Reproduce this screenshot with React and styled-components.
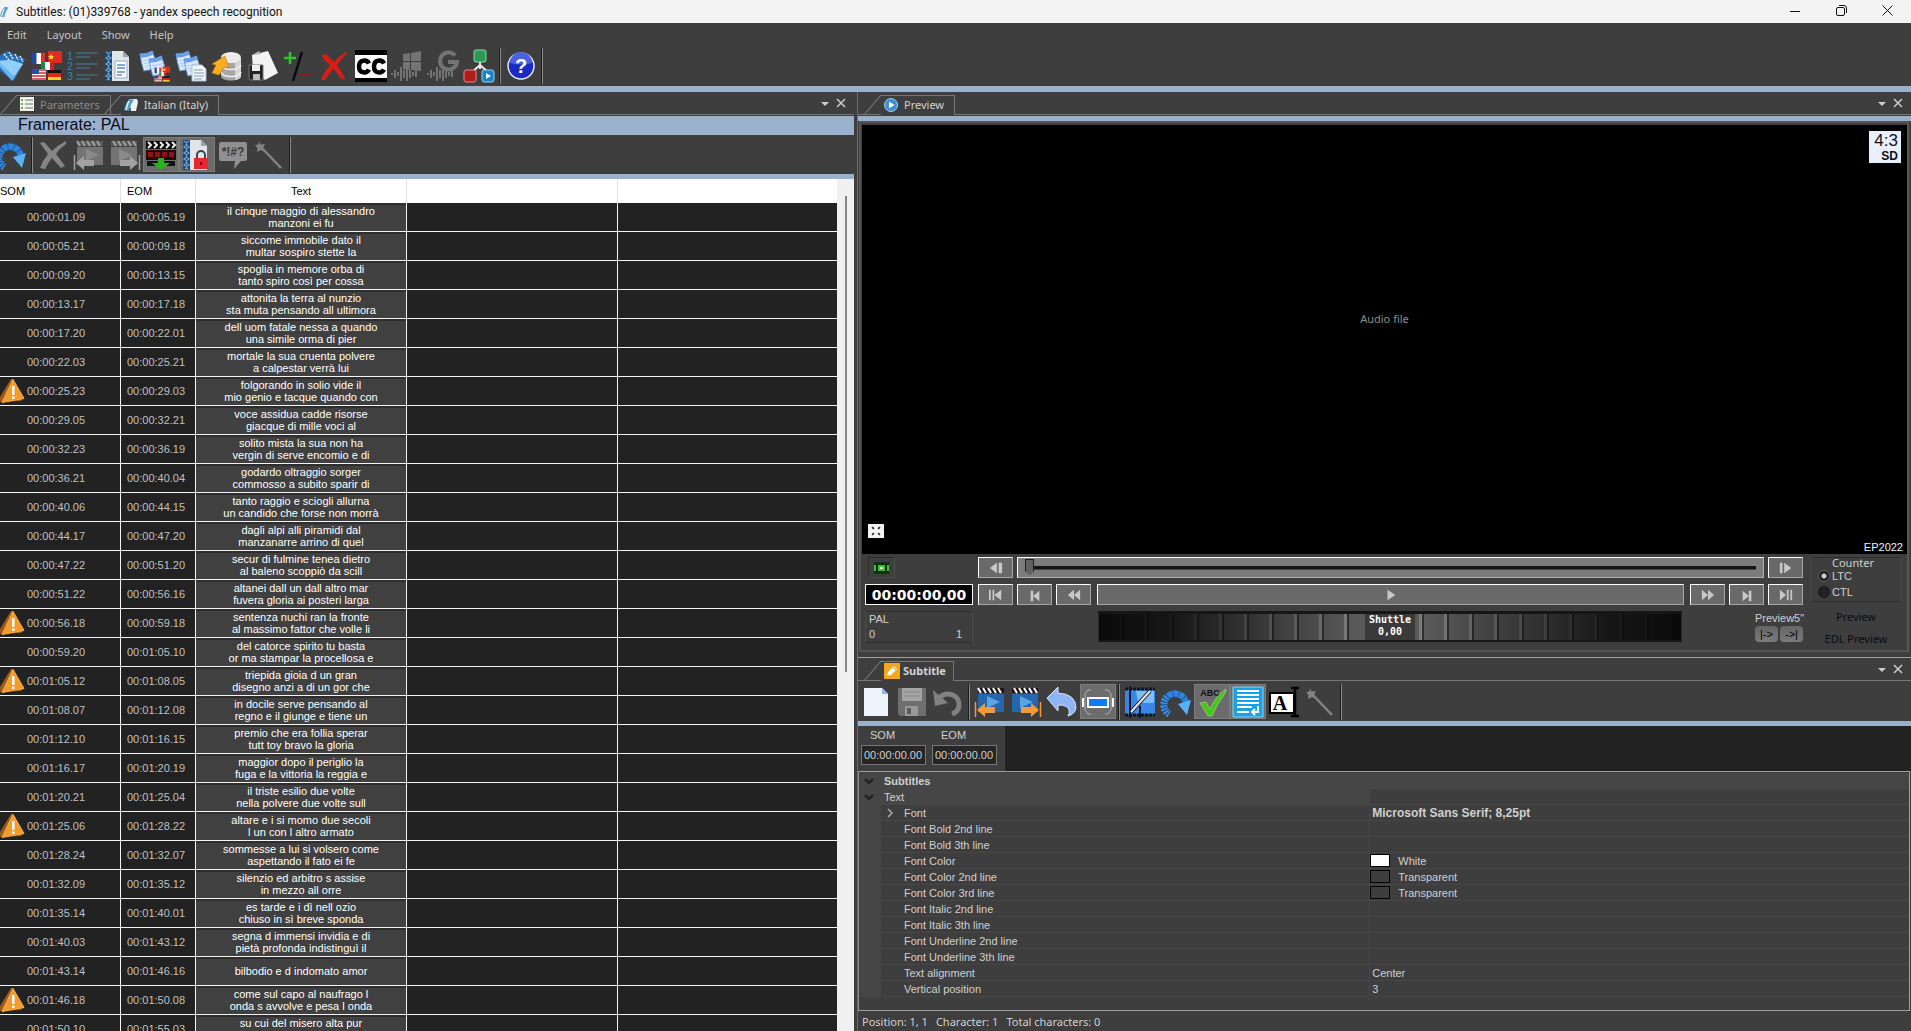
import React from "react";
import styled, { createGlobalStyle, css } from "styled-components";

const sans = '"Liberation Sans", Arial, sans-serif';
const ui = '"Noto Sans", "Open Sans", sans-serif';
const c = {
  bg: "#3e3e3e",
  dark: "#222222",
  blue: "#9ab1cd",
  line: "#777777",
  text: "#d0d0d0",
};

const Global = createGlobalStyle`
  * { box-sizing: border-box; }
  html, body { margin: 0; height: 100%; }
  body { background: ${c.bg}; font: 11px ${sans}; color: ${c.text}; overflow: hidden; }
  button, input { font: inherit; color: inherit; }
  button { padding: 0; border: 0; background: none; }
  svg { display: block; overflow: visible; }
`;

const Frame = styled.div`
  display: flex;
  flex-direction: column;
  height: 100vh;
  min-width: 1000px;
`;

/* ---------- window chrome ---------- */
const TitleBar = styled.header`
  display: flex;
  align-items: center;
  height: 23px;
  flex: none;
  background: #f3f3f3;
  color: #111;
`;
const TitleIcon = styled.span`
  width: 16px;
  overflow: hidden;
`;
const Title = styled.h1`
  flex: 1;
  margin: 0;
  font: 12px Roboto, ${ui};
`;
const WindowButton = styled.button`
  display: grid;
  place-items: center;
  width: 46px;
  height: 23px;
  padding: 0 2px 2px 0;
`;
const MenuBar = styled.nav`
  display: flex;
  flex: none;
  gap: 20px;
  height: 23px;
  padding-left: 7px;
  align-items: center;
`;
const MenuItem = styled.button`
  font: 11px/16px ${ui};
  color: #c4c4c4;
`;

/* ---------- toolbars ---------- */
const Toolbar = styled.div`
  display: flex;
  align-items: center;
  flex: none;
  height: ${(p) => p.$height}px;
  margin-left: ${(p) => (p.$cut ? -7 : 0)}px;
  border-bottom: ${(p) => p.$rule}px solid ${c.blue};
`;
const ToolButton = styled.button`
  display: grid;
  place-items: center;
  width: 36px;
  height: 35px;
  flex: none;
  ${(p) =>
    p.$active &&
    css`
      background: #6c6c6c;
      box-shadow: inset 0 0 0 1px #7c7c7c;
    `}
`;
const Divider = styled.span`
  width: 2px;
  height: 36px;
  margin: 0 2px;
  flex: none;
  border-left: 1px solid #1c1c1c;
  border-right: 1px solid #8a8a8a;
`;

/* ---------- docking panels ---------- */
const Workspace = styled.main`
  display: grid;
  flex: 1;
  min-height: 0;
  grid-template-columns: minmax(0, 854fr) minmax(0, 1054fr);
  gap: 3px;
`;
const LeftPane = styled.section`
  display: flex;
  flex-direction: column;
  min-height: 0;
  overflow: hidden;
`;
const RightPane = styled.section`
  display: flex;
  flex-direction: column;
  min-height: 0;
  border-left: 1px solid #6c6c6c;
`;
const TabStrip = styled.div`
  display: flex;
  flex: none;
  height: 24px;
  padding: 3px 8px 1px ${(p) => p.$inset || 0}px;
  box-shadow: inset 0 -1px ${c.bg}, inset 0 -2px ${c.line};
`;
const Tab = styled.button`
  position: relative;
  display: flex;
  height: 20px;
  margin-left: ${(p) => (p.$overlap ? -7 : 0)}px;
  color: ${(p) => (p.$dim ? "#8a8a8a" : "#d2d2d2")};
  font: ${(p) => (p.$bold ? "bold " : "")}11px ${ui};
  &::before {
    content: "";
    width: 17px;
    background: linear-gradient(to bottom right, transparent calc(50% - 1px), ${c.line} 50%, transparent calc(50% + 1px));
  }
`;
const TabBody = styled.span`
  display: flex;
  align-items: center;
  gap: ${(p) => (p.$tight ? 3 : 6)}px;
  height: ${(p) => (p.$dim ? 19 : 20)}px;
  padding: 0 ${(p) => (p.$tight ? 7 : 10)}px 2px 3px;
  border-top: 1px solid ${c.line};
  border-right: 1px solid ${c.line};
  background: ${c.bg};
`;
const StripTools = styled.div`
  display: flex;
  align-items: center;
  gap: 6px;
  margin-left: auto;
  padding-bottom: 4px;
`;

/* ---------- subtitle list ---------- */
const FrameRate = styled.h2`
  flex: none;
  height: 19px;
  margin: 0;
  padding-left: 18px;
  background: ${c.blue};
  color: #0a0a12;
  font: 16px/17px ${sans};
`;
const ListArea = styled.div`
  display: flex;
  flex: 1;
  min-height: 0;
  overflow: hidden;
  background: ${c.dark};
`;
const ListScroll = styled.div`
  flex: 1;
  overflow: hidden;
`;
const List = styled.table`
  width: 100%;
  table-layout: fixed;
  border-collapse: separate;
  border-spacing: 0;
`;
const Col = styled.col`
  width: ${(p) => p.$w};
`;
const Head = styled.th`
  height: 24px;
  padding: 0 0 6px ${(p) => p.$pad || 0}px;
  background: #fff;
  border-right: ${(p) => (p.$last ? 0 : 1)}px solid #e2e2e2;
  color: #000;
  font-weight: normal;
  text-align: ${(p) => p.$align || "left"};
  vertical-align: bottom;
`;
const Cell = styled.td`
  height: 29px;
  padding: 0 0 0 ${(p) => p.$pad || 0}px;
  background: ${(p) => (p.$text ? "#404040" : c.dark)};
  border-bottom: 1px solid #f4f4f4;
  border-right: ${(p) => (p.$last ? 0 : 1)}px solid #f4f4f4;
  box-shadow: ${(p) => (p.$text ? "inset 0 2px #2e2e2e" : "none")};
  color: ${(p) => (p.$text ? "#fff" : "#c0c0c0")};
  line-height: 12px;
  text-align: ${(p) => (p.$text ? "center" : "left")};
  white-space: pre-line;
`;
const SomCell = styled.div`
  display: flex;
  align-items: center;
`;
const Flag = styled.span`
  width: 27px;
`;
const ScrollTrack = styled.div`
  width: 17px;
  padding: 17px 0 0 8px;
  background: #f0f0f0;
`;
const ScrollThumb = styled.div`
  width: 2px;
  height: 57%;
  background: #878787;
`;

/* ---------- preview ---------- */
const PreviewBody = styled.div`
  display: flex;
  flex-direction: column;
  flex: 1;
  min-height: 0;
  margin: 0 2px 5px 1px;
  border: 2px solid #555;
`;
const BlueRule = styled.div`
  flex: none;
  height: 5px;
  background: ${c.blue};
`;
const Stage = styled.div`
  position: relative;
  display: grid;
  place-items: center;
  flex: 1;
  min-height: 0;
  margin: 2px 0 0 1px;
  padding-bottom: 42px;
  background: #000;
  color: #8c8c8c;
  font: 11px ${ui};
`;
const RatioBadge = styled.div`
  position: absolute;
  top: 6px;
  right: 6px;
  width: 32px;
  height: 32px;
  padding-right: 3px;
  background: #e9effc;
  color: #111;
  text-align: right;
  font: 17px/19px ${sans};
`;
const RatioKind = styled.div`
  font: bold 12px/13px ${sans};
`;
const FullScreen = styled.button`
  position: absolute;
  left: 6px;
  bottom: 16px;
`;
const StageVersion = styled.span`
  position: absolute;
  right: 4px;
  bottom: 0;
  color: #f2f2f2;
  font: 11px/14px ${sans};
`;
const Controls = styled.div`
  display: grid;
  grid-template-columns: 108px minmax(0, 1fr) 92px;
  gap: 5px;
  height: 96px;
  flex: none;
  padding: 3px 5px 0 4px;
`;
const ControlColumn = styled.div`
  display: flex;
  flex-direction: column;
  gap: 6px;
  padding-right: ${(p) => (p.$deck ? 2 : 0)}px;
`;
const ControlRow = styled.div`
  display: flex;
  gap: 4px;
  height: ${(p) => p.$height || 21}px;
`;
const FilmButton = styled.button`
  display: grid;
  place-items: center;
  width: 27px;
  height: 21px;
  margin-left: 3px;
  border: 1px solid;
  border-color: #2c2c2c #4c4c4c #4c4c4c #2c2c2c;
`;
const TimeCode = styled.input`
  width: 100%;
  height: 21px;
  padding: 0;
  border: 1px solid #fff;
  background: #000;
  color: #fff;
  text-align: center;
  font: bold 14px "DejaVu Sans", sans-serif;
`;
const Standard = styled.div`
  display: grid;
  grid-template-columns: 1fr 1fr;
  padding: 0 10px 2px 3px;
  line-height: 15px;
  height: 32px;
  border: 1px solid;
  border-color: #2f2f2f #4a4a4a #2f2f2f #4a4a4a;
`;
const StandardName = styled.span`
  grid-column: 1 / -1;
`;
const StandardEnd = styled.span`
  text-align: right;
`;
const Transport = styled.button`
  display: grid;
  place-items: center;
  height: 21px;
  ${(p) => (p.$wide ? "flex: 1; margin: 0 2px;" : "width: 35px; flex: none;")}
  background: #696969;
  border: 1px solid #fff;
  border-right-color: #a5a5a5;
  border-bottom-color: #a5a5a5;
`;
const Slider = styled.input`
  appearance: none;
  flex: 1;
  min-width: 0;
  height: 21px;
  margin: 0;
  padding: 0 7px;
  background: #7c7c7c;
  border: 1px solid #fff;
  border-bottom-color: #b0b0b0;
  border-right-color: #b0b0b0;
  &::-webkit-slider-runnable-track {
    height: 4px;
    background: #161616;
    border-bottom: 1px solid #444;
  }
  &::-webkit-slider-thumb {
    appearance: none;
    width: 9px;
    height: 17px;
    margin-top: -7px;
    clip-path: polygon(0 0, 100% 0, 100% 75%, 50% 100%, 0 75%);
    background: linear-gradient(90deg, #222 1px, #606060 1px 8px, #222 8px);
    border-top: 1px solid #222;
  }
`;
const Shuttle = styled.div`
  display: grid;
  place-items: center;
  flex: 1;
  height: 31px;
  margin-left: 120px;
  border: 1px solid #2a2a2a;
  border-top: 3px solid #161616;
  border-bottom: 2px solid #161616;
  background: linear-gradient(90deg, #0a0a0a, rgba(10, 10, 10, 0.85) 12%, rgba(10, 10, 10, 0) 44%, rgba(10, 10, 10, 0) 56%, rgba(10, 10, 10, 0.85) 88%, #0a0a0a),
    repeating-linear-gradient(90deg, #5a5a5a 0 20px, #7c7c7c 20px 23px, #303030 23px 25px);
`;
const ShuttleLabel = styled.span`
  height: 26px;
  padding: 0 4px;
  background: #3a3a3a;
  color: #fff;
  text-align: center;
  white-space: pre-line;
  font: bold 10px/12px "DejaVu Sans Mono", monospace;
`;
const ShortPreview = styled.div`
  display: grid;
  grid-template-columns: 23px 23px;
  gap: 0 2px;
  width: 117px;
  justify-content: end;
  line-height: 15px;
  white-space: nowrap;
`;
const ShortTitle = styled.span`
  grid-column: 1 / -1;
`;
const PillButton = styled.button`
  height: 16px;
  border-radius: 4px;
  background: linear-gradient(#666, #7a7a7a);
  color: #000;
  font: 11px/14px ${sans};
`;
const Counter = styled.fieldset`
  display: flex;
  flex-direction: column;
  height: 45px;
  margin: 0;
  padding: 0 0 0 7px;
  border: 1px solid;
  border-color: #2f2f2f #4a4a4a #2f2f2f #4a4a4a;
`;
const CounterTitle = styled.span`
  padding-left: 14px;
  line-height: 10px;
  font-family: ${ui};
`;
const RadioLabel = styled.label`
  display: flex;
  align-items: center;
  gap: 2px;
  height: 16px;
`;
const Radio = styled.input`
  appearance: none;
  width: 12px;
  height: 12px;
  margin: 0;
  border-radius: 50%;
  background: #222;
  border: 1px solid #1a1a1a;
  &:checked {
    background: radial-gradient(#ccc 0 2px, #222 3px);
    border-color: #5a5a5a;
  }
`;
const FlatButton = styled.button`
  height: 16px;
  color: #0c0c0c;
  font: 11px ${ui};
`;

/* ---------- subtitle editor ---------- */
const EditorPane = styled.section`
  display: flex;
  flex-direction: column;
  flex: none;
  border-top: 1px solid #a0a0a0;
`;
const TimesRow = styled.div`
  display: flex;
  height: 45px;
  background: ${c.dark};
`;
const Times = styled.div`
  display: flex;
  gap: 6px;
  width: 147px;
  padding: 2px 3px;
  background: ${c.bg};
`;
const TimeField = styled.label`
  display: flex;
  flex-direction: column;
  line-height: 15px;
  gap: 2px;
  text-indent: 9px;
`;
const TimeInput = styled.input`
  width: 65px;
  height: 20px;
  padding: 0 2px;
  border: 1px solid #777;
  background: #262626;
`;
const PropertyBox = styled.div`
  height: 240px;
  margin-right: 1px;
  padding-top: 1px;
  border: 1px solid #a0a0a0;
  border-left-color: #888;
  background: ${c.bg};
`;
const Properties = styled.table`
  width: 100%;
  table-layout: fixed;
  border-collapse: separate;
  border-spacing: 0;
`;
const PropGutter = styled.td`
  padding: 0 0 0 5px;
  background: #464646;
`;
const PropName = styled.td`
  height: 16px;
  padding: 0 0 0 ${(p) => (p.$group ? 3 : 23)}px;
  background: ${(p) => (p.$group ? "#464646" : c.bg)};
  border-bottom: 1px solid #464646;
  font-weight: ${(p) => (p.$bold ? "bold" : "normal")};
  line-height: 14px;
`;
const PropValue = styled.td`
  padding: 0 0 0 ${(p) => (p.$swatch ? 0 : 2)}px;
  background: ${(p) => (p.$group ? "#464646" : c.bg)};
  border-bottom: 1px solid #464646;
  border-left: 1px solid #464646;
  font: ${(p) => (p.$bold ? "bold 12px" : "11px")}/14px ${sans};
`;
const PropNameInner = styled.span`
  display: flex;
  align-items: center;
  gap: 11px;
  margin-left: ${(p) => (p.$expand ? -17 : 0)}px;
`;
const SwatchRow = styled.span`
  display: flex;
  align-items: center;
  gap: 8px;
`;
const Swatch = styled.span`
  width: 20px;
  height: 13px;
  border: 1px solid #000;
  background: ${(p) => p.$fill};
`;
const StatusBar = styled.footer`
  display: flex;
  align-items: center;
  gap: 8px;
  height: 20px;
  padding-left: 4px;
  font: 11px ${ui};
`;

/* ---------- icons ---------- */
const Svg = ({ s = 32, w, h, children, vb }) => (
  <svg width={w || s} height={h || s} viewBox={vb || "0 0 32 32"} fill="none" aria-hidden="true">
    {children}
  </svg>
);
const Sheet = ({ x = 0, y = 0, k = 1 }) => (
  <g transform={`translate(${x} ${y}) scale(${k})`}>
    <path d="M0 3Q6 4 13 0Q16 8 18 17Q12 20 4 21Q1 12 0 3Z" fill="#dbe8fc" stroke="#5f95dd" strokeWidth="1" />
    <path d="M0 3Q6 4 13 0L14 4Q8 7 1 7Z" fill="#6a9fe8" />
    <path d="M3 10q6 0 11-2M4 13q6 0 11-2M5 16q6 0 9-2" stroke="#a9c6f2" />
  </g>
);
const Flags = ({ x = 0, y = 0, k = 1 }) => (
  <g transform={`translate(${x} ${y}) scale(${k})`}>
    <path d="M1 3h13v11H1z" fill="#fff" />
    <path d="M1 3h4.500v11H1z" fill="#2747a8" />
    <path d="M10 3h4v11h-4z" fill="#d33" />
    <path d="M17 1h14v12H17z" fill="#e02c1c" />
    <path d="M20 4l1 2h2l-1.500 1.500.5 2-2-1-2 1 .5-2L17 6h2z" fill="#fd3" />
    <path d="M10 12h13v8H10z" fill="#fff" />
    <path d="M10 12h4v8h-4z" fill="#17894a" />
    <path d="M19 12h4v8h-4z" fill="#c22" />
    <path d="M1 19h14v11H1z" fill="#f4f4f4" />
    <path d="M1 20h14M1 23h14M1 26h14M1 29h14" stroke="#c33" strokeWidth="1.500" />
    <path d="M1 19h7v5H1z" fill="#2d4f9e" />
    <path d="M17 20h13v3H17z" fill="#111" />
    <path d="M17 23h13v4H17z" fill="#e1261c" />
    <path d="M17 27h13v3H17z" fill="#fc2" />
  </g>
);
const DnaDoc = ({ lock }) => (
  <Svg>
    <path d="M8 1h12l6 6v24H8z" fill="#dfe5ea" />
    <path d="M20 1v6h6z" fill="#9ba5af" />
    <path d="M2 1h7v30H2z" fill="#22486f" />
    <path d="M3 2q6 3 0 6q6 3 0 6q6 3 0 6q6 3 0 6q5 2 1 4M8 2q-6 3 0 6q-6 3 0 6q-6 3 0 6q-6 3 0 6q-5 2-1 4" stroke="#6fa9de" strokeWidth="1.200" />
    {lock ? (
      <>
        <path d="M16 19v-3a4 4 0 0 1 8 0v3" stroke="#444" strokeWidth="2" />
        <path d="M13 19h14v11H13z" fill="#e9262e" />
        <path d="M20 23v3" stroke="#600" strokeWidth="2" />
      </>
    ) : (
      <>
        <path d="M12 11h12v17H12z" fill="#fff" stroke="#9ab" />
        <path d="M14 15h8M14 18h8M14 22h8M14 25h5" stroke="#5a8bd0" strokeWidth="1.300" />
      </>
    )}
  </Svg>
);
const Arc = () => (
  <Svg>
    <path d="M9 28A11 11 0 1 1 26 18" stroke="#1c5da8" strokeWidth="7" />
    <path d="M9 28A11 11 0 0 1 8 10" stroke="#5aa6ea" strokeWidth="7" strokeDasharray="1 2" />
    <path d="M8 10A11 11 0 0 1 26 18" stroke="#2f83d8" strokeWidth="6" strokeDasharray="5 1" />
    <path d="M18 18l13-4-4 15z" fill="#58b2f6" />
  </Svg>
);
const Clapper = ({ dir, color }) => {
  const body = color ? "#2467ae" : "#747474";
  const a = color ? "#f5993d" : "#a2a2a2";
  return (
    <Svg>
      <path d={dir < 0 ? "M4 8h26v18H4z" : "M2 8h26v18H2z"} fill={body} />
      <path d={dir < 0 ? "M13 10l13 6-13 6z" : "M10 10l13 6-13 6z"} fill={color ? "#5ba4e2" : "#8a8a8a"} />
      <path d={dir < 0 ? "M4 2h26v5H4z" : "M2 2h26v5H2z"} fill={color ? "#181818" : "#5a5a5a"} />
      <path d="M4 2l3 5M9 2l3 5M14 2l3 5M19 2l3 5M24 2l3 5" stroke={color ? "#fff" : "#a0a0a0"} strokeWidth="2" />
      {dir < 0 ? (
        <>
          <path d="M1.500 16v15" stroke={a} strokeWidth="1.500" />
          <path d="M3 24l8-7v4h10v6H11v4z" fill={a} />
        </>
      ) : (
        <>
          <path d="M30.500 16v15" stroke={a} strokeWidth="1.500" />
          <path d="M29 24l-8-7v4H11v6h10v4z" fill={a} />
        </>
      )}
    </Svg>
  );
};
const Wave = () => (
  <path d="M1 23v2M4 20v8M7 22v4M10 17v14M13 20v8M16 16v15M19 20v8M22 22v4M25 20v7" stroke="#808080" strokeWidth="1.600" />
);
const Wand = () => (
  <Svg>
    <path d="M8 8L28 29" stroke="#5e5e5e" strokeWidth="3" />
    <path d="M8 8L28 29" stroke="#8b8b8b" strokeWidth="1.500" />
    <path d="M6 2l1.500 3.500L12 5l-2 4 2 4-4-2-4 2 .5-4L2 6l3.500-.500z" fill="#838383" />
  </Svg>
);
const Warning = () => (
  <svg width="24" height="26" viewBox="0 0 24 26" aria-hidden="true">
    <path d="M11 1L0 19v5l21-1 3-3L13 1z" fill="#9a5a1c" />
    <path d="M13 1.500L2 24.500l22-4z" fill="#f39a2d" stroke="#f7ae4b" strokeLinejoin="round" />
    <path d="M12 8h2.500v9H12zM12 18.500h2.500V21H12z" fill="#fff" />
  </svg>
);
const DocCurl = ({ s = 14 }) => (
  <Svg s={s} vb="0 0 14 14">
    <path d="M5 1h8l1 3-2 9H7z" fill="#eef4f6" />
    <path d="M6 1C3 3 1 7 0 12l5 1C6 9 7 5 10 2z" fill="#4f9fc9" />
    <path d="M5 3C3 6 3 9 2 12" stroke="#dff2fb" strokeWidth="1.500" />
  </Svg>
);

const mainTools = [
  ["Open", <Svg><path d="M0 8l12-7 18 8-11 22L2 19z" fill="#2870bd" /><path d="M0 11l16-1 12 4-11 17z" fill="#6ab8f2" /><path d="M3 11l13-1 12 4-9 12z" fill="#8fd0fa" /><path d="M9 4l5 6M14 2l4 7M20 4l3 6M25 6l3 6" stroke="#e4f3ff" strokeWidth="1.500" strokeDasharray="2 1" /></Svg>],
  ["Languages", <Svg><Flags /></Svg>],
  ["Numbered list", <Svg><path d="M9 3h22M9 7h14M9 14h22M9 18h14M9 25h22M9 29h14" stroke="#47697f" strokeWidth="1.300" /><g fill="#2789c9" fontFamily="Liberation Sans" fontSize="11"><text x="0" y="10">1</text><text x="0" y="20">2</text><text x="0" y="30">3</text></g></Svg>],
  ["Document", <DnaDoc />],
  ["Copy languages", <Svg><Sheet x={1} y={1} k={0.95} /><Sheet x={10} y={6} k={0.95} /><Flags x={15} y={16} k={0.52} /></Svg>],
  ["Copy text", <Svg><Sheet x={1} y={1} k={0.95} /><Sheet x={9} y={6} k={0.95} /><path d="M17 15h10l4 4v12H17z" fill="#f4f8fc" stroke="#a9bdd6" /><path d="M19 20h9M19 23h10M19 26h10M19 29h8" stroke="#8098b4" /></Svg>],
  ["Import from database", <Svg><path d="M10 8v18c0 6 20 6 20 0V8z" fill="#a6a6a6" /><path d="M24 11v19q6-1 6-4V8z" fill="#d6d6d6" /><ellipse cx="20" cy="7.500" rx="10" ry="5.500" fill="#ececec" /><path d="M10 15c2 6 18 6 20 0M10 22c2 6 18 6 20 0" stroke="#f0f0f0" strokeWidth="1.500" /><path d="M1 23l4-8-4-1L14 6l4 12-5-1-5 8z" fill="#fbab24" stroke="#c97d0c" strokeWidth=".7" /></Svg>],
  ["Save copy", <Svg><path d="M5 5l16-4 10 22-13 7L6 20z" fill="#f3f3f3" /><path d="M5 5l7-4 2 3z" fill="#b5b5b5" /><path d="M2 15h14v15H3l-1-1z" fill="#222" stroke="#777" /><path d="M5 15h8v6H5z" fill="#ededed" /><path d="M6 24h7v6H6z" fill="#bbb" /></Svg>],
  ["Add or remove", <Svg><path d="M7 2v12M1 8h12" stroke="#2fc52f" strokeWidth="2.500" /><path d="M19 2L10 31" stroke="#0a0a0a" strokeWidth="2.500" /><path d="M17 25h12" stroke="#8e1e1e" strokeWidth="2" /></Svg>],
  ["Delete", <Svg><path d="M3 6q2-3 5-1l7 7Q20 6 27 2q2 0 1 1-6 6-10 12 4 6 8 13-2 2-5 0-3-6-7-9-4 5-8 11-3 1-4-1 4-8 9-14-6-4-8-9z" fill="#d81e14" /></Svg>],
  ["Closed captions", <Svg><path d="M0 0h32v32H0z" fill="#000" /><path d="M0 5h32v23H0z" fill="#fff" /><g stroke="#000" strokeWidth="4.500"><path d="M14 13.500C12 9.500 4 9 4 16.500s8 7 10 3" /><path d="M29 13.500C27 9.500 19 9 19 16.500s8 7 10 3" /></g></Svg>],
  ["Windows recognition", <Svg><Wave /><path d="M12 4l7-1v8h-7zM20 3l10-2v10H20zM12 12h7v8l-7-1zM20 12h10v9l-10-1z" fill="#747474" /></Svg>],
  ["Google recognition", <Svg><Wave /><path d="M28 5.500A8.500 8.500 0 1 0 30 12h-9" stroke="#747474" strokeWidth="4" /></Svg>],
  ["Workflow", <Svg><path d="M17 10v9M17 15l-9 8M17 15l9 8" stroke="#eee" strokeWidth="2" /><rect x="11" y="0" width="12" height="12" rx="2" fill="#2a9a55" stroke="#8fd9aa" /><rect x="1" y="20" width="12" height="12" rx="2" fill="#b01c1c" stroke="#e58a8a" /><rect x="19" y="20" width="12" height="12" rx="2" fill="#1b83c8" stroke="#8fd3f7" /><path d="M23 23l5 3-5 3z" fill="#fff" /></Svg>],
];
const Help = (
  <Svg>
    <circle cx="16" cy="16" r="13" fill="#1a2bc4" stroke="#e4e8ff" strokeWidth="1.500" />
    <path d="M5 13a11 11 0 0 1 22 0q-11 3-22 0z" fill="#4c60e4" />
    <text x="16" y="23" textAnchor="middle" fontFamily="Liberation Sans" fontWeight="bold" fontSize="20" fill="#fff">?</text>
  </Svg>
);
const listTools = [
  ["Delete row", <Svg><path d="M3 4l4-1 8 9Q21 6 29 2v3q-6 4-10 10l9 12-4 2-9-10q-4 5-7 11l-5-1q3-8 8-14z" fill="#858585" /></Svg>],
  ["Set in", <Clapper dir={-1} />],
  ["Set out", <Clapper dir={1} />],
  ["Insert clip", <Svg><path d="M1 2h30v8H1z" fill="#050505" /><path d="M3 3l3 3-3 3M9 3l3 3-3 3M15 3l3 3-3 3M21 3l3 3-3 3M27 3l3 3-3 3" stroke="#eee" strokeWidth="2" /><path d="M1 11h30v10H1z" fill="#2c0505" /><path d="M3 13h5v5H3zM10 13h5v5h-5zM17 13h5v5h-5zM24 13h5v5h-5z" fill="#8d1219" /><path d="M2 22h28v5H2z" fill="#111" /><path d="M13 19h6v5h6l-9 7-9-7h6z" fill="#26b31f" /></Svg>, true],
  ["Lock text", <DnaDoc lock />, true],
  ["Comment", <Svg><path d="M4 3h24q2 0 2 2v15q0 2-2 2h-4l-7 8 1-8H4q-2 0-2-2V5q0-2 2-2z" fill="#909090" /><text x="16" y="17" textAnchor="middle" fontFamily="Liberation Sans" fontWeight="bold" fontSize="12" fill="#3c3c3c">*!#?</text></Svg>],
  ["Wizard", <Wand />],
];
const editorTools = [
  ["New", <Svg><path d="M4 2h18l6 6v22H4z" fill="#eef3fd" /><path d="M22 2v6h6z" fill="#8db7ee" /></Svg>],
  ["Save", <Svg><path d="M2 2h28v28H4l-2-2z" fill="#6e6e6e" /><path d="M6 2h20v13H6z" fill="#a4a4a4" /><path d="M8 6h16M8 10h16" stroke="#888" /><path d="M9 20h13v10H9z" fill="#9a9a9a" /><path d="M11 22h4v6h-4z" fill="#5a5a5a" /></Svg>],
  ["Undo", <Svg><path d="M6 13C14 4 28 8 27 20q-1 6-7 8" stroke="#818181" strokeWidth="5" /><path d="M1 4l2 16 13-3z" fill="#818181" /></Svg>],
  null,
  ["Go to in", <Clapper dir={-1} color />],
  ["Go to out", <Clapper dir={1} color />],
  ["Back", <Svg><path d="M12 1v6q18 1 18 15-1 6-8 8 2-3 1-6-1-5-11-5v6L1 12z" fill="#8fb4f4" stroke="#d7e4fc" /></Svg>],
  ["Fit", <Svg><path d="M9 4H6L3 8v16l3 4h3M23 4h3l3 4v16l-3 4h-3" stroke="#b0b0b0" /><path d="M1 12v9M31 12v9" stroke="#fff" strokeWidth="2" /><path d="M6 12h20v9H6z" fill="#0d7bf2" stroke="#fff" strokeWidth="2" /></Svg>, true],
  null,
  ["Film cut", <Svg><path d="M1 4h30v24H1z" fill="#3a86e6" /><path d="M12 5h18v12H14z" fill="#79c0fb" /><path d="M1 3h30M1 29h30" stroke="#10182c" strokeWidth="3" strokeDasharray="3 1" /><path d="M6 0v32M16 20v12" stroke="#10182c" strokeWidth="2" /><path d="M7 26L26 5" stroke="#1b1b1b" strokeWidth="4" /><path d="M7 26L26 5" stroke="#e9e9e9" strokeWidth="2" /></Svg>],
  ["Refresh", <Arc />],
  ["Spell check", <Svg><text x="14" y="10" textAnchor="middle" fontFamily="Liberation Sans" fontWeight="bold" fontSize="9" fill="#111">ABC</text><path d="M4 17l6-1 4 7Q20 10 30 3q0 3-2 6-7 9-12 21h-4z" fill="#49c41f" stroke="#9be06e" strokeWidth=".7" /></Svg>, true],
  ["Wrap lines", <Svg><path d="M1 1h30v30H1z" fill="#1ba0e2" stroke="#8fd3f7" /><path d="M5 5h22M5 9h22M5 13h22M5 17h22M5 21h15M5 26h12" stroke="#fff" strokeWidth="2" /><path d="M26 20v6h-5M23 23l-3 3 3 3" stroke="#fff" strokeWidth="2" /></Svg>, true],
  ["Text box", <Svg><path d="M2 7h24v20H2z" fill="#fff" stroke="#000" strokeWidth="2" /><text x="12" y="24" textAnchor="middle" fontFamily="Liberation Serif" fontWeight="bold" fontSize="20" fill="#000">A</text><path d="M23 2h8M27 2v28M23 30h8" stroke="#000" strokeWidth="2.500" /></Svg>],
  ["Wizard", <Wand />],
  null,
];

const glyph = {
  frameBack: "M9 2v12L1 8zM11 2h4v12h-4z",
  frameNext: "M1 2h3v12H1zM6 2l8 6-8 6z",
  toStart: "M0 2h2v12H0zM4 2h2v12H4zM14 2v12L6 8z",
  prev: "M3 3h3v12H3zM13 3v12L6 9z",
  rewind: "M8 2v12L1 8zM15 2v12L8 8z",
  play: "M4 2l9 6-9 6z",
  forward: "M1 2l7 6-7 6zM8 2l7 6-7 6z",
  next: "M3 3l7 6-7 6zM10 3h3v12h-3z",
  toEnd: "M1 2l7 6-7 6zM9 2h2v12H9zM13 2h2v12h-2z",
};
const TransportButton = ({ name, label, wide }) => (
  <Transport aria-label={label} $wide={wide}>
    <Svg s={14} vb="0 0 16 16"><path d={glyph[name]} fill="#c8c8c8" /></Svg>
  </Transport>
);

const Tools = ({ items }) =>
  items.map((t, i) =>
    t ? (
      <ToolButton key={i} aria-label={t[0]} $active={t[2]}>{t[1]}</ToolButton>
    ) : (
      <Divider key={i} />
    )
  );

const StripActions = () => (
  <StripTools>
    <button aria-label="Panel menu">
      <Svg w={10} h={10} vb="0 0 10 10"><path d="M1 4h8L5 8z" fill="#ccc" /></Svg>
    </button>
    <button aria-label="Close panel">
      <Svg w={10} h={10} vb="0 0 10 10"><path d="M1 1l8 8M9 1L1 9" stroke="#ccc" strokeWidth="1.500" /></Svg>
    </button>
  </StripTools>
);

/* ---------- data ---------- */
const rows = [
  ["00:00:01.09", "00:00:05.19", "il cinque maggio di alessandro\nmanzoni ei fu"],
  ["00:00:05.21", "00:00:09.18", "siccome immobile dato il\nmultar sospiro stette la"],
  ["00:00:09.20", "00:00:13.15", "spoglia in memore orba di\ntanto spiro così per cossa"],
  ["00:00:13.17", "00:00:17.18", "attonita la terra al nunzio\nsta muta pensando all ultimora"],
  ["00:00:17.20", "00:00:22.01", "dell uom fatale nessa a quando\nuna simile orma di pier"],
  ["00:00:22.03", "00:00:25.21", "mortale la sua cruenta polvere\na calpestar verrà lui"],
  ["00:00:25.23", "00:00:29.03", "folgorando in solio vide il\nmio genio e tacque quando con", true],
  ["00:00:29.05", "00:00:32.21", "voce assidua cadde risorse\ngiacque di mille voci al"],
  ["00:00:32.23", "00:00:36.19", "solito mista la sua non ha\nvergin di serve encomio e di"],
  ["00:00:36.21", "00:00:40.04", "godardo oltraggio sorger\ncommosso a subito sparir di"],
  ["00:00:40.06", "00:00:44.15", "tanto raggio e sciogli allurna\nun candido che forse non morrà"],
  ["00:00:44.17", "00:00:47.20", "dagli alpi alli piramidi dal\nmanzanarre arrino di quel"],
  ["00:00:47.22", "00:00:51.20", "secur di fulmine tenea dietro\nal baleno scoppiò da scill"],
  ["00:00:51.22", "00:00:56.16", "altanei dall un dall altro mar\nfuvera gloria ai posteri larga"],
  ["00:00:56.18", "00:00:59.18", "sentenza nuchi ran la fronte\nal massimo fattor che volle li", true],
  ["00:00:59.20", "00:01:05.10", "del catorce spirito tu basta\nor ma stampar la procellosa e"],
  ["00:01:05.12", "00:01:08.05", "triepida gioia d un gran\ndisegno anzi a di un gor che", true],
  ["00:01:08.07", "00:01:12.08", "in docile serve pensando al\nregno e il giunge e tiene un"],
  ["00:01:12.10", "00:01:16.15", "premio che era follia sperar\ntutt toy bravo la gloria"],
  ["00:01:16.17", "00:01:20.19", "maggior dopo il periglio la\nfuga e la vittoria la reggia e"],
  ["00:01:20.21", "00:01:25.04", "il triste esilio due volte\nnella polvere due volte sull"],
  ["00:01:25.06", "00:01:28.22", "altare e i si momo due secoli\nl un con l altro armato", true],
  ["00:01:28.24", "00:01:32.07", "sommesse a lui si volsero come\naspettando il fato ei fe"],
  ["00:01:32.09", "00:01:35.12", "silenzio ed arbitro s assise\nin mezzo all orre"],
  ["00:01:35.14", "00:01:40.01", "es tarde e i dì nell ozio\nchiuso in sì breve sponda"],
  ["00:01:40.03", "00:01:43.12", "segna d immensi invidia e di\npietà profonda indistinguì il"],
  ["00:01:43.14", "00:01:46.16", "bilbodio e d indomato amor"],
  ["00:01:46.18", "00:01:50.08", "come sul capo al naufrago l\nonda s avvolve e pesa l onda", true],
  ["00:01:50.10", "00:01:55.03", "su cui del misero alta pur\ndianzi scorrea la vista"],
];

const props = [
  { name: "Subtitles", group: true, bold: true, groupValue: true },
  { name: "Text", group: true },
  { name: "Font", value: "Microsoft Sans Serif; 8,25pt", boldValue: true, expand: true },
  { name: "Font Bold 2nd line" },
  { name: "Font Bold 3th line" },
  { name: "Font Color", value: "White", swatch: "#fff" },
  { name: "Font Color 2nd line", value: "Transparent", swatch: "transparent" },
  { name: "Font Color 3rd line", value: "Transparent", swatch: "transparent" },
  { name: "Font Italic 2nd line" },
  { name: "Font Italic 3th line" },
  { name: "Font Underline 2nd line" },
  { name: "Font Underline 3th line" },
  { name: "Text alignment", value: "Center" },
  { name: "Vertical position", value: "3" },
];

const SubtitleList = () => (
  <ListArea>
    <ListScroll>
      <List>
        <colgroup>
          <Col $w="121px" />
          <Col $w="75px" />
          <Col $w="211px" />
          <Col $w="211px" />
          <Col $w="auto" />
        </colgroup>
        <thead>
          <tr>
            <Head scope="col">SOM</Head>
            <Head scope="col" $pad={6}>EOM</Head>
            <Head scope="col" $align="center">Text</Head>
            <Head scope="col" />
            <Head scope="col" $last />
          </tr>
        </thead>
        <tbody>
          {rows.map(([som, eom, text, warn]) => (
            <tr key={som}>
              <Cell>
                <SomCell>
                  <Flag>{warn && <Warning />}</Flag>
                  {som}
                </SomCell>
              </Cell>
              <Cell $pad={6}>{eom}</Cell>
              <Cell $text>{text}</Cell>
              <Cell />
              <Cell $last />
            </tr>
          ))}
        </tbody>
      </List>
    </ListScroll>
    <ScrollTrack>
      <ScrollThumb />
    </ScrollTrack>
  </ListArea>
);

const PreviewControls = () => (
  <Controls>
    <ControlColumn>
      <FilmButton aria-label="Film strip">
        <Svg w={15} h={12} vb="0 0 15 12">
          <path d="M0 0h15v12H0z" fill="#082808" />
          <path d="M0 3h2v6H0zM4 3h7v6H4zM13 3h2v6h-2z" fill="#3fbf35" />
          <path d="M6 5h3v2H6z" fill="#d7f7c8" />
          <path d="M0 1h15M0 11h15" stroke="#1d571d" strokeDasharray="2 1" />
        </Svg>
      </FilmButton>
      <TimeCode aria-label="Time code" defaultValue="00:00:00,00" />
      <Standard>
        <StandardName>PAL</StandardName>
        <span>0</span>
        <StandardEnd>1</StandardEnd>
      </Standard>
    </ControlColumn>
    <ControlColumn $deck>
      <ControlRow>
        <TransportButton name="frameBack" label="Frame back" />
        <Slider type="range" aria-label="Position" defaultValue={0} />
        <TransportButton name="frameNext" label="Frame forward" />
      </ControlRow>
      <ControlRow>
        <TransportButton name="toStart" label="To start" />
        <TransportButton name="prev" label="Previous" />
        <TransportButton name="rewind" label="Rewind" />
        <TransportButton name="play" label="Play" wide />
        <TransportButton name="forward" label="Forward" />
        <TransportButton name="next" label="Next" />
        <TransportButton name="toEnd" label="To end" />
      </ControlRow>
      <ControlRow $height={31}>
        <Shuttle>
          <ShuttleLabel>{"Shuttle\n0,00"}</ShuttleLabel>
        </Shuttle>
        <ShortPreview>
          <ShortTitle>Preview5"</ShortTitle>
          <PillButton>{"|->"}</PillButton>
          <PillButton>{"->|"}</PillButton>
        </ShortPreview>
      </ControlRow>
    </ControlColumn>
    <ControlColumn>
      <Counter>
        <CounterTitle>Counter</CounterTitle>
        <RadioLabel><Radio type="radio" name="counter" defaultChecked />LTC</RadioLabel>
        <RadioLabel><Radio type="radio" name="counter" />CTL</RadioLabel>
      </Counter>
      <FlatButton>Preview</FlatButton>
      <FlatButton>EDL Preview</FlatButton>
    </ControlColumn>
  </Controls>
);

const PropertyGrid = () => (
  <PropertyBox>
    <Properties>
      <colgroup>
        <Col $w="22px" />
        <Col $w="46.5%" />
        <Col $w="auto" />
      </colgroup>
      <tbody>
        {props.map((p) => (
          <tr key={p.name}>
            <PropGutter>
              {p.group && (
                <Svg w={10} h={8} vb="0 0 10 8"><path d="M1 2l4 4 4-4" stroke="#1e1e1e" strokeWidth="2" /></Svg>
              )}
            </PropGutter>
            <PropName $group={p.group} $bold={p.bold}>
              <PropNameInner $expand={p.expand}>
                {p.expand && (
                  <Svg w={6} h={10} vb="0 0 6 10"><path d="M1 1l4 4-4 4" stroke="#aaa" strokeWidth="1.500" /></Svg>
                )}
                {p.name}
              </PropNameInner>
            </PropName>
            <PropValue $group={p.groupValue} $bold={p.boldValue} $swatch={p.swatch}>
              {p.swatch ? (
                <SwatchRow><Swatch $fill={p.swatch} />{p.value}</SwatchRow>
              ) : (
                p.value
              )}
            </PropValue>
          </tr>
        ))}
      </tbody>
    </Properties>
  </PropertyBox>
);

export default function App() {
  return (
    <Frame>
      <Global />
      <TitleBar>
        <TitleIcon><DocCurl s={12} /></TitleIcon>
        <Title>Subtitles: (01)339768 - yandex speech recognition</Title>
        <WindowButton aria-label="Minimize">
          <Svg s={10} vb="0 0 10 10"><path d="M0 5.500h10" stroke="#111" /></Svg>
        </WindowButton>
        <WindowButton aria-label="Restore">
          <Svg s={11} vb="0 0 11 11"><rect x=".5" y="2.500" width="8" height="8" rx="1.500" stroke="#111" /><path d="M3 .5h5q2.500 0 2.500 2.500v5" stroke="#111" /></Svg>
        </WindowButton>
        <WindowButton aria-label="Close">
          <Svg s={11} vb="0 0 11 11"><path d="M.5.5l10 10M10.500.5l-10 10" stroke="#111" /></Svg>
        </WindowButton>
      </TitleBar>
      <MenuBar>
        <MenuItem>Edit</MenuItem>
        <MenuItem>Layout</MenuItem>
        <MenuItem>Show</MenuItem>
        <MenuItem>Help</MenuItem>
      </MenuBar>
      <Toolbar $height={46} $rule={6} $cut>
        <Tools items={mainTools} />
        <Divider />
        <ToolButton aria-label="Help">{Help}</ToolButton>
        <Divider />
      </Toolbar>

      <Workspace>
        <LeftPane>
          <TabStrip>
            <Tab $dim>
              <TabBody $dim>
                <Svg s={14} vb="0 0 14 14">
                  <path d="M0 0h14v14H0z" fill="#f1f3ea" />
                  <path d="M1 2h2v2H1zM1 6h2v2H1zM1 10h2v2H1z" fill="#6bb33a" />
                  <path d="M5 3h8M5 7h8M5 11h8" stroke="#777" />
                </Svg>
                Parameters
              </TabBody>
            </Tab>
            <Tab $overlap>
              <TabBody><DocCurl />Italian (Italy)</TabBody>
            </Tab>
            <StripActions />
          </TabStrip>
          <FrameRate>Framerate: PAL</FrameRate>
          <Toolbar $height={44} $rule={5} $cut>
            <ToolButton aria-label="Refresh"><Arc /></ToolButton>
            <Divider />
            <Tools items={listTools} />
            <Divider />
          </Toolbar>
          <SubtitleList />
        </LeftPane>

        <RightPane>
          <TabStrip $inset={6}>
            <Tab>
              <TabBody>
                <Svg s={14} vb="0 0 14 14"><circle cx="7" cy="7" r="6.500" fill="#3d8fd0" stroke="#a5d2f2" /><path d="M5 3.500l5.500 3.500L5 10.500z" fill="#fff" /></Svg>
                Preview
              </TabBody>
            </Tab>
            <StripActions />
          </TabStrip>
          <BlueRule />
          <PreviewBody>
            <Stage>
              <span>Audio file</span>
              <RatioBadge>4:3<RatioKind>SD</RatioKind></RatioBadge>
              <FullScreen aria-label="Full screen">
                <Svg w={16} h={14} vb="0 0 16 14"><path d="M0 0h16v14H0z" fill="#f2f2f2" /><path d="M4 3l2 2M12 3l-2 2M4 11l2-2M12 11l-2-2" stroke="#333" strokeWidth="1.500" /><path d="M4 4h1V3M12 4h-1V3M4 10h1v1M12 10h-1v1" stroke="#333" /></Svg>
              </FullScreen>
              <StageVersion>EP2022</StageVersion>
            </Stage>
            <PreviewControls />
          </PreviewBody>

          <EditorPane>
            <TabStrip $inset={6}>
              <Tab $bold>
                <TabBody $tight>
                  <Svg s={16} vb="0 0 16 16"><path d="M0 0h16v16H0z" fill="#f5a71c" /><path d="M3 13l1-4 6-6 3 3-6 6z" fill="#fff" /><path d="M9 4l3 3M3 13l2-1" stroke="#f5a71c" /></Svg>
                  Subtitle
                </TabBody>
              </Tab>
              <StripActions />
            </TabStrip>
            <Toolbar $height={44} $rule={5}>
              <Tools items={editorTools} />
            </Toolbar>
            <TimesRow>
              <Times>
                <TimeField>SOM<TimeInput defaultValue="00:00:00.00" /></TimeField>
                <TimeField>EOM<TimeInput defaultValue="00:00:00.00" /></TimeField>
              </Times>
            </TimesRow>
            <PropertyGrid />
            <StatusBar>
              <span>Position: 1, 1</span>
              <span>Character: 1</span>
              <span>Total characters: 0</span>
            </StatusBar>
          </EditorPane>
        </RightPane>
      </Workspace>
    </Frame>
  );
}
